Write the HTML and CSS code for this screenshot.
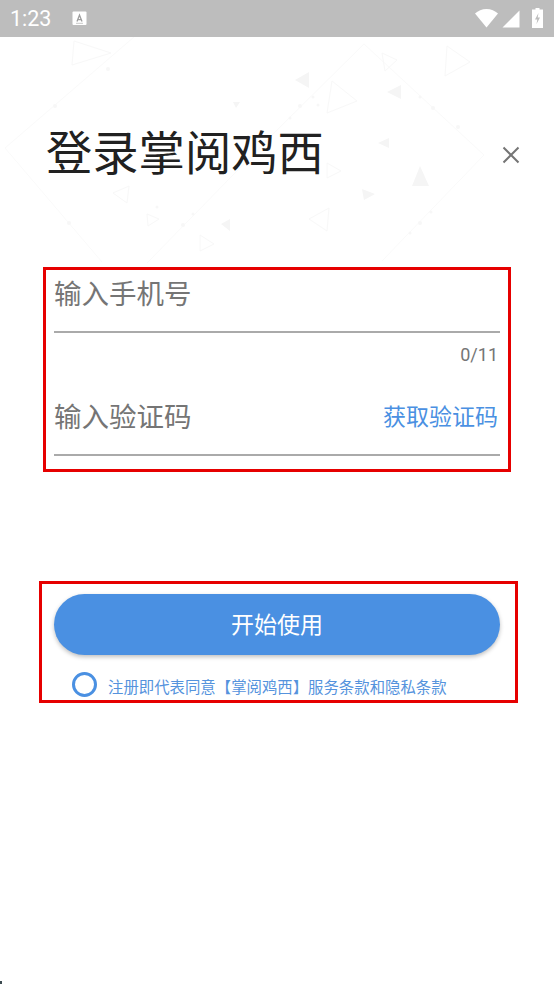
FILE: index.html
```html
<!DOCTYPE html>
<html lang="zh-CN">
<head>
<meta charset="utf-8">
<title>登录掌阅鸡西</title>
<link rel="stylesheet" href="styles.css">
</head>
<body>
<div class="screen">
  <svg class="pattern" width="554" height="270" viewBox="0 0 554 270" fill="none">
    <g stroke="#fafafa" stroke-width="1">
      <path d="M134 37 5 148 102 262M147 263 276 131 364 44 484 155 382 261"/>
    </g>
    <g stroke="#f8f8f8" stroke-width="1">
      <path d="M74 41 111 53 72 65zM447 46 470 62 445 76zM332 81 357 101 327 113zM382 53 397 60 385 71zM327 163 341 171 327 178zM309 219 329 208 327 231zM113 193 129 186 127 203zM147 214 159 219 148 226zM200 235 214 244 200 251z"/>
    </g>
    <g fill="#f5f5f5">
      <path d="M295 80 309 72 309 88zM387 92 401 85 401 99zM378 143 389 138 389 148zM412 186H429L420 166zM362 189 375 194 364 200zM221 224 230 219 230 231zM233 102H240L236 108z"/>
    </g>
    <g fill="#f7f7f7">
      <circle cx="55" cy="106" r="2"/><circle cx="108" cy="69" r="2"/><circle cx="69" cy="223" r="2"/><circle cx="183" cy="225" r="2"/><circle cx="300" cy="106" r="2"/><circle cx="318" cy="105" r="1.500"/><circle cx="433" cy="108" r="2"/><circle cx="458" cy="127" r="2"/><circle cx="420" cy="223" r="2"/><circle cx="420" cy="97" r="1.500"/><circle cx="157" cy="207" r="1.500"/><circle cx="193" cy="214" r="1.500"/><circle cx="290" cy="118" r="1.500"/><circle cx="313" cy="97" r="1.500"/><circle cx="431" cy="212" r="1.500"/><circle cx="410" cy="233" r="1.500"/>
    </g>
  </svg>

  <header class="status">
    <div class="status-left">
      <span class="time">1:23</span>
      <svg class="a-icon" width="15" height="15" viewBox="0 0 15 15"><rect x="0.5" y="0.5" width="14" height="13.5" rx="1" fill="#fff"/><path d="M5 10.500 7.500 4l2.500 6.500M6 8.600h3" fill="none" stroke="#9e9e9e" stroke-width="1.300"/><path d="M4 12.300h7" stroke="#c8c8c8" stroke-width="1"/></svg>
    </div>
    <div class="status-right">
      <svg class="wifi" width="23" height="19" viewBox="0 0 23 19"><path d="M0 4.500C3 1.800 7 0 11.500 0S20 1.800 23 4.500L11.500 18.500z" fill="#fff"/></svg>
      <svg class="signal" width="18" height="18" viewBox="0 0 18 18"><path d="M17.500 0.500v17H0.500z" fill="#fff"/></svg>
      <svg class="battery" width="11" height="20" viewBox="0 0 11 20"><path d="M3.500 0h4v1.500h3.500V20H0V1.500h3.500z" fill="#fff"/><path d="M6.500 5 3 11.500h2.300L4.500 16 8 9.500H5.700z" fill="#bdbdbd"/></svg>
    </div>
  </header>

  <main class="content">
    <div class="title-row">
      <h1 class="title">登录掌阅鸡西</h1>
      <svg class="close" width="18" height="18" viewBox="0 0 18 18"><path d="M1.500 1.500l15 15M16.500 1.500l-15 15" stroke="#757575" stroke-width="2"/></svg>
    </div>

    <section class="form-box">
      <div class="field field-phone"><span class="placeholder">输入手机号</span></div>
      <div class="counter">0/11</div>
      <div class="field field-code">
        <span class="placeholder">输入验证码</span>
        <span class="get-code">获取验证码</span>
      </div>
    </section>

    <section class="action-box">
      <button class="start">开始使用</button>
      <div class="agree">
        <span class="radio"></span>
        <span class="agree-text">注册即代表同意【掌阅鸡西】服务条款和隐私条款</span>
      </div>
    </section>
  </main>
  <span class="corner-mark"></span>
</div>
</body>
</html>
```

FILE: styles.css
```css
* { box-sizing: border-box; }
html, body { margin: 0; padding: 0; background: #fff; }
body { font-family: "Roboto", "Noto Sans CJK SC", sans-serif; }
.screen { position: relative; width: 554px; height: 984px; overflow: hidden; background: #fff; }

.status { height: 37px; background: #bdbdbd; display: flex; align-items: center; justify-content: space-between; padding: 0 5px 0 10px; position: relative; z-index: 1; }
.status-left { display: flex; align-items: center; gap: 21px; }
.time { font-size: 21.500px; color: #fff; line-height: 37px; }
.a-icon { display: block; }
.status-right { display: flex; align-items: center; }
.status-right svg { display: block; }
.signal { margin-left: 4px; }
.battery { margin-left: 12px; margin-right: 6px; margin-top: -1px; }

.pattern { position: absolute; left: 0; top: 0; }
.corner-mark { position: absolute; left: 0; top: 981px; width: 2px; height: 3px; background: #3c4a50; }

.content { position: relative; }
.title-row { display: flex; align-items: center; justify-content: space-between; height: 68px; margin-top: 79px; padding: 0 34px 0 46px; }
.title { margin: 0; font-size: 46.300px; font-weight: 400; line-height: 68px; color: #212121; font-family: "Noto Sans CJK SC", sans-serif; }
.close { display: block; margin-top: 9px; }

.form-box { width: 468px; height: 205px; margin: 83px 0 0 43px; border: 3px solid #e60000; padding: 0 8px; }
.field { width: 446px; border-bottom: 2px solid #aaa; display: flex; align-items: center; justify-content: space-between; font-family: "Noto Sans CJK SC", sans-serif; }
.field-phone { height: 63px; padding-bottom: 17px; }
.field-code { height: 64px; padding-bottom: 16px; }
.placeholder { font-size: 27.500px; color: #757575; line-height: 36px; }
.get-code { font-size: 23px; color: #4a90e2; line-height: 36px; padding-right: 2px; }
.counter { width: 444px; height: 59px; padding-top: 10px; text-align: right; font-size: 18px; line-height: 24px; color: #757575; }

.action-box { width: 479px; height: 122px; margin: 109px 0 0 39px; border: 3px solid #e60000; padding: 10px 12px 0; }
.start { display: block; width: 446px; height: 61px; border: 0; border-radius: 31px; background: #4a90e2; color: #fff; font-family: "Noto Sans CJK SC", sans-serif; font-size: 23px; line-height: 30px; box-shadow: 0 2px 4px rgba(0,0,0,.25); padding: 0 0 4px; }
.agree { display: flex; align-items: center; margin-top: 15px; padding-left: 18px; gap: 11px; }
.radio { width: 25px; height: 25px; border: 3px solid #4a90e2; border-radius: 50%; flex: none; }
.agree-text { font-family: "Noto Sans CJK SC", sans-serif; font-size: 15.400px; line-height: 25px; color: #5593dd; white-space: nowrap; margin-top: 4px; }
```
